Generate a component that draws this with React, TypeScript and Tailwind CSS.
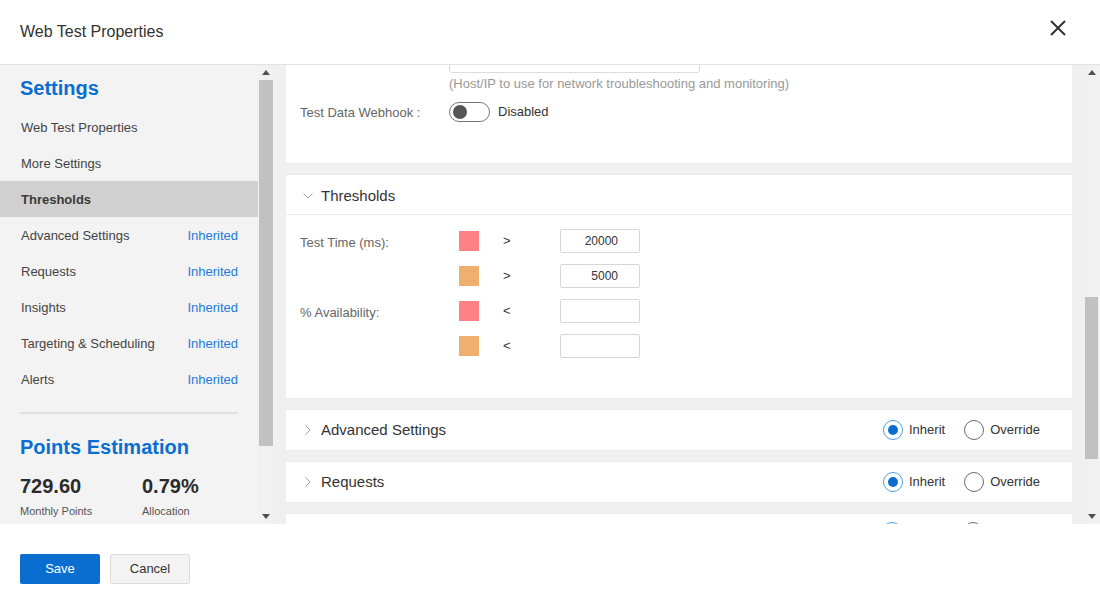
import clsx from "clsx";

const navItems = [
    { name: "Web Test Properties" },
    { name: "More Settings" },
    { name: "Thresholds", active: true },
    { name: "Advanced Settings", tag: "Inherited" },
    { name: "Requests", tag: "Inherited" },
    { name: "Insights", tag: "Inherited" },
    { name: "Targeting & Scheduling", tag: "Inherited" },
    { name: "Alerts", tag: "Inherited" },
];

const thresholdRows = [
    { label: "Test Time (ms):", color: "bg-[#ff8087]", op: ">", value: "20000" },
    { label: "", color: "bg-[#f0ae6f]", op: ">", value: "5000" },
    { label: "% Availability:", color: "bg-[#ff8087]", op: "<", value: "" },
    { label: "", color: "bg-[#f0ae6f]", op: "<", value: "" },
];

function Arrow({ up }: { up?: boolean }) {
    return (
        <div className="h-[15px] flex items-center justify-center">
            <svg width="8" height="5" viewBox="0 0 8 5">
                <polygon points={up ? "0,5 4,0 8,5" : "0,0 8,0 4,5"} fill="#505050" />
            </svg>
        </div>
    );
}

function Circle({ checked }: { checked?: boolean }) {
    return (
        <span
            className={clsx(
                "w-[20px] h-[20px] rounded-full border bg-white flex items-center justify-center",
                checked ? "border-[#4d9de4]" : "border-[#6b6b6b]"
            )}
        >
            {checked && <span className="w-[10px] h-[10px] rounded-full bg-[#0a6ed1]" />}
        </span>
    );
}

function Radio({ checked, label }: { checked?: boolean; label: string }) {
    return (
        <label className="flex items-center gap-[6px] text-[13px] text-[#333]">
            <Circle checked={checked} />
            {label}
        </label>
    );
}

function CollapsedCard({ title }: { title: string }) {
    return (
        <div className="h-[40px] shrink-0 bg-white shadow-[0_0_2px_rgba(0,0,0,0.08)] flex items-center pl-[19px] pr-[32px]">
            <svg width="6" height="10" viewBox="0 0 6 10">
                <polyline points="0.5,0.5 5,5 0.5,9.5" fill="none" stroke="#9a9a9a" strokeWidth="1" />
            </svg>
            <span className="ml-[10px] text-[15px] text-[#333]">{title}</span>
            <div className="ml-auto flex items-center gap-[19px]">
                <Radio checked label="Inherit" />
                <Radio label="Override" />
            </div>
        </div>
    );
}

function App() {
    return (
        <div className="w-[1100px] h-[600px] bg-white flex flex-col overflow-hidden font-['Liberation_Sans',Arial,sans-serif] text-[#333]">
            {/* header */}
            <header className="h-[65px] shrink-0 flex items-start justify-between pl-5 pr-[34px] border-b border-[#e3e3e3]">
                <h1 className="mt-[23px] text-[16px] leading-[18px] text-[#333]">Web Test Properties</h1>
                <svg className="mt-[20px]" width="16" height="16" viewBox="0 0 16 16">
                    <path d="M1 1 L15 15 M15 1 L1 15" stroke="#333" strokeWidth="2" />
                </svg>
            </header>

            <div className="h-[459px] shrink-0 flex">
                {/* left nav */}
                <aside className="w-[258px] bg-[#f3f3f3] overflow-hidden flex flex-col">
                    <h2 className="pt-[11px] px-5 mb-[9px] text-[20px] leading-[24px] font-bold text-[#0a6ed1]">Settings</h2>
                    {navItems.map((item) => (
                        <div
                            key={item.name}
                            className={clsx(
                                "h-[36px] shrink-0 flex items-center justify-between pl-[21px] pr-5 pt-[2px] text-[13px]",
                                item.active ? "bg-[#d0d0d0] font-bold text-[#3a3a3a]" : "text-[#444]"
                            )}
                        >
                            <span>{item.name}</span>
                            {item.tag && <span className="text-[#1b7bd6]">{item.tag}</span>}
                        </div>
                    ))}
                    <div className="mx-5 mt-[15px] h-[2px] shrink-0 bg-[#e0e0e0]" />
                    <h2 className="mt-[21px] px-5 text-[20px] leading-[24px] font-bold text-[#0a6ed1]">Points Estimation</h2>
                    <div className="mt-[15px] px-5 grid grid-cols-[122px_1fr]">
                        <div>
                            <p className="text-[20px] leading-[24px] font-bold text-[#2b2b2b]">729.60</p>
                            <p className="mt-[6px] text-[11px] leading-[14px] text-[#555]">Monthly Points</p>
                        </div>
                        <div>
                            <p className="text-[20px] leading-[24px] font-bold text-[#2b2b2b]">0.79%</p>
                            <p className="mt-[6px] text-[11px] leading-[14px] text-[#555]">Allocation</p>
                        </div>
                    </div>
                </aside>
                <div className="w-[16px] shrink-0 bg-[#f1f1f1] flex flex-col">
                    <Arrow up />
                    <div className="h-[366px] mx-[1px] bg-[#c1c1c1]" />
                    <div className="flex-1" />
                    <Arrow />
                </div>

                {/* right content */}
                <div className="flex-1 flex bg-[#f0f0f0] pl-[12px]">
                    <div className="w-[786px] overflow-hidden flex flex-col gap-[12px]">
                        <div className="-mt-[30px] shrink-0 bg-white shadow-[0_0_2px_rgba(0,0,0,0.08)] pt-[12px] pb-[41px] pl-[14px]">
                            <div className="flex">
                                <div className="w-[149px]" />
                                <div className="w-[251px] h-[26px] border border-[#dcdcdc] rounded-[3px]" />
                            </div>
                            <p className="ml-[149px] mt-[3px] text-[13px] leading-[16px] text-[#999]">
                                (Host/IP to use for network troubleshooting and monitoring)
                            </p>
                            <div className="mt-[10px] flex items-center h-[20px]">
                                <span className="w-[149px] text-[13px] text-[#666] pt-[2px]">Test Data Webhook :</span>
                                <span className="w-[41px] h-[20px] rounded-full border border-[#777] bg-white flex items-center pl-[3px]">
                                    <span className="w-[14px] h-[14px] rounded-full bg-[#555]" />
                                </span>
                                <span className="ml-[8px] text-[13px] text-[#333]">Disabled</span>
                            </div>
                        </div>

                        <div className="shrink-0 bg-white shadow-[0_0_2px_rgba(0,0,0,0.08)]">
                            <div className="h-[40px] flex items-center pl-[17px] pt-[3px] border-b border-[#ececec]">
                                <svg width="10" height="6" viewBox="0 0 10 6">
                                    <polyline points="0.5,0.5 5,5 9.5,0.5" fill="none" stroke="#9a9a9a" strokeWidth="1" />
                                </svg>
                                <span className="ml-[8px] text-[15px] text-[#333]">Thresholds</span>
                            </div>
                            <div className="pt-[14px] pb-[40px] pl-[14px] flex flex-col gap-[11px]">
                                {thresholdRows.map((row, i) => (
                                    <div key={i} className="h-[24px] flex items-center">
                                        <span className="w-[159px] text-[13px] text-[#666] pt-[3px]">{row.label}</span>
                                        <span className={clsx("w-[20px] h-[20px]", row.color)} />
                                        <span className="w-[81px] pl-[24px] text-[13px] text-[#333]">{row.op}</span>
                                        <div className="w-[80px] h-[24px] border border-[#d6d6d6] rounded-[2px] flex items-center justify-end pr-[21px] text-[12px] text-[#333]">
                                            {row.value}
                                        </div>
                                    </div>
                                ))}
                            </div>
                        </div>

                        <CollapsedCard title="Advanced Settings" />
                        <CollapsedCard title="Requests" />
                        {/* next card, only its top edge is in view */}
                        <div className="h-[40px] shrink-0 bg-white shadow-[0_0_2px_rgba(0,0,0,0.08)] flex items-start justify-end pt-[8px] pr-[89px] gap-[61px]">
                            <Circle checked />
                            <Circle />
                        </div>
                    </div>
                    <div className="flex-1" />
                    <div className="w-[17px] shrink-0 bg-[#f1f1f1] flex flex-col">
                        <Arrow up />
                        <div className="h-[217px]" />
                        <div className="h-[162px] mx-[2px] bg-[#c1c1c1]" />
                        <div className="flex-1" />
                        <Arrow />
                    </div>
                </div>
            </div>

            {/* footer */}
            <footer className="flex-1 flex items-start gap-[10px] px-5 pt-[30px]">
                <button className="w-[80px] h-[30px] bg-[#0a6ed1] rounded-[2px] text-[13px] text-white">Save</button>
                <button className="w-[80px] h-[30px] bg-[#f3f3f3] border border-[#dcdcdc] rounded-[2px] text-[13px] text-[#333]">Cancel</button>
            </footer>
        </div>
    );
}

export default App;
